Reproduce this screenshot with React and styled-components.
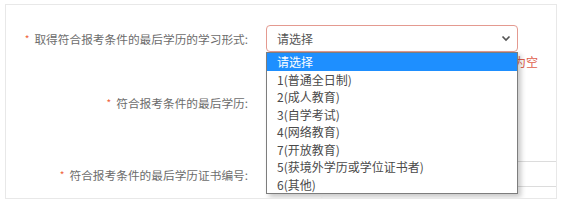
import React from "react";
import styled, { createGlobalStyle } from "styled-components";

const GlobalStyle = createGlobalStyle`
    html, body {
        margin: 0;
        padding: 0;
        background: #fff;
    }
    body {
        font-family: "Noto Sans CJK SC", "Liberation Sans", sans-serif;
        font-size: 12px;
    }
`;

const options = [
    "请选择",
    "1(普通全日制)",
    "2(成人教育)",
    "3(自学考试)",
    "4(网络教育)",
    "7(开放教育)",
    "5(获境外学历或学位证书者)",
    "6(其他)",
];

const App = () => {
    return (
        <Page>
            <GlobalStyle />
            <Panel>
                <FormRow $gap={37}>
                    <Label>
                        <Star>*</Star>取得符合报考条件的最后学历的学习形式:
                    </Label>
                    <Control>
                        <SelectBox $error>
                            <SelectText>请选择</SelectText>
                            <svg width="10" height="7" viewBox="0 0 10 7">
                                <path d="M1.5 1.5 L5 5 L8.5 1.5" fill="none" stroke="#555" strokeWidth="1.7" />
                            </svg>
                        </SelectBox>
                        <OptionList>
                            {options.map((opt, i) => (
                                <OptionItem key={opt} $active={i === 0}>
                                    {opt}
                                </OptionItem>
                            ))}
                        </OptionList>
                        <ErrorText>学习形式不能为空</ErrorText>
                    </Control>
                </FormRow>
                <FormRow $gap={45}>
                    <Label>
                        <Star>*</Star>符合报考条件的最后学历:
                    </Label>
                    <Control>
                        {/* 下拉列表盖住了这个选择框 */}
                        <SelectBox />
                    </Control>
                </FormRow>
                <FormRow $gap={9}>
                    <Label>
                        <Star>*</Star>符合报考条件的最后学历证书编号:
                    </Label>
                    <Control>
                        <TextInput />
                    </Control>
                </FormRow>
                <Hint>注：请如实填写证书编号，证书编号可在 学信网 查询</Hint>
            </Panel>
        </Page>
    );
};

export default App;

const Page = styled.div`
    width: 561px;
    height: 210px;
    padding: 4px 3px 0 5px;
    box-sizing: border-box;
`;

const Panel = styled.div`
    width: 552px;
    height: 195px;
    box-sizing: border-box;
    border: 1px solid #e8e8e8;
    padding-top: 20px;
    overflow: hidden;
    position: relative;
`;

const FormRow = styled.div`
    display: flex;
    align-items: center;
    height: 27px;
    margin-bottom: ${(props) => props.$gap}px;
`;

const Label = styled.div`
    width: 260px;
    flex-shrink: 0;
    box-sizing: border-box;
    padding-right: 18px;
    text-align: right;
    color: #6c6c6c;
    font-size: 11.7px;
    white-space: nowrap;
`;

const Star = styled.span`
    color: #f0643c;
    font-size: 10px;
    margin-right: 5px;
    position: relative;
    top: -1px;
`;

const Control = styled.div`
    position: relative;
    width: 252px;
    height: 27px;
`;

const SelectBox = styled.div`
    height: 27px;
    box-sizing: border-box;
    border: 1px solid ${(props) => (props.$error ? "#e49a90" : "#d9d9d9")};
    border-radius: 4px;
    display: flex;
    align-items: center;
    justify-content: space-between;
    padding: 0 6px 0 10px;
    background: #fff;
`;

const SelectText = styled.span`
    color: #555;
    font-size: 12px;
`;

const OptionList = styled.ul`
    position: absolute;
    top: 27px;
    left: 0;
    width: 252px;
    margin: 0;
    padding: 0;
    list-style: none;
    box-sizing: border-box;
    border: 1px solid #7d7d7d;
    background: #fff;
    box-shadow: 3px 3px 5px rgba(0, 0, 0, 0.22);
    z-index: 2;
`;

const OptionItem = styled.li`
    height: 17.5px;
    line-height: 17.5px;
    padding-left: 10px;
    font-size: 12px;
    color: ${(props) => (props.$active ? "#fff" : "#4a4a4a")};
    background: ${(props) => (props.$active ? "#1e8fff" : "#fff")};
    white-space: nowrap;
`;

const ErrorText = styled.div`
    position: absolute;
    top: 28px;
    right: -20px;
    color: #e0604c;
    font-size: 12px;
    white-space: nowrap;
`;

const TextInput = styled.div`
    width: 310px;
    height: 26px;
    box-sizing: border-box;
    border: 1px solid #dcdcdc;
    border-radius: 3px;
`;

const Hint = styled.div`
    padding-left: 262px;
    color: #c4c4c4;
    font-size: 12px;
    line-height: 14px;
    white-space: nowrap;
`;
